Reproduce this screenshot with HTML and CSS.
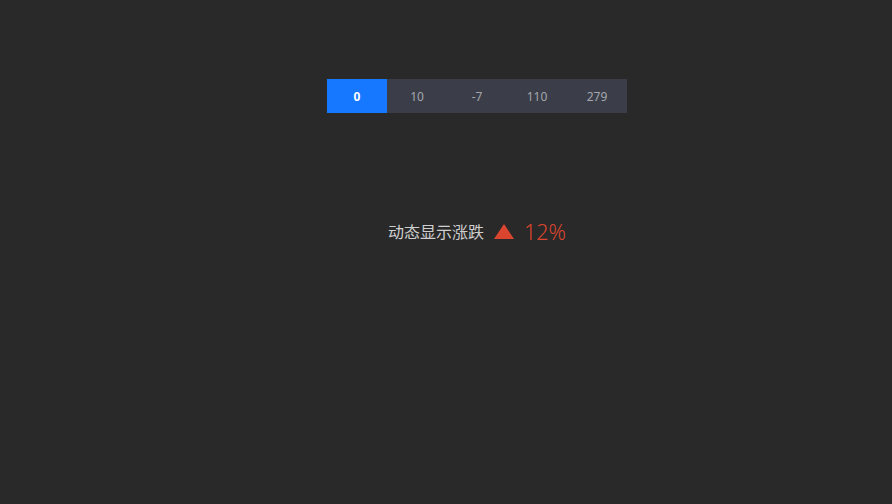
FILE: index.html
```html
<!DOCTYPE html>
<html>
<head>
<meta charset="utf-8">
<link rel="stylesheet" href="styles.css">
</head>
<body>
<div class="stage">
  <div class="segmented">
    <div class="seg active">0</div>
    <div class="seg">10</div>
    <div class="seg">-7</div>
    <div class="seg">110</div>
    <div class="seg">279</div>
  </div>
  <div class="trend">
    <span class="label">动态显示涨跌</span>
    <svg class="arrow" width="20" height="15" viewBox="0 0 20 15"><polygon points="10,0 20,15 0,15" fill="#d9452e"/></svg>
    <span class="value">12%</span>
  </div>
</div>
</body>
</html>
```
FILE: styles.css
```css
html, body {
  margin: 0;
  padding: 0;
  background: #292929;
  width: 892px;
  height: 504px;
  overflow: hidden;
  font-family: "Noto Sans", "Noto Sans CJK SC", sans-serif;
}
.stage {
  display: flex;
  flex-direction: column;
  align-items: center;
  padding-top: 79px;
  padding-left: 62px;
}
.segmented {
  display: flex;
  background: #3b3e48;
}
.seg {
  width: 60px;
  height: 34px;
  display: flex;
  align-items: center;
  justify-content: center;
  font-size: 12px;
  color: #a3a6ae;
}
.seg.active {
  background: #1677ff;
  color: #ffffff;
  font-weight: bold;
}
.trend {
  margin-top: 102px;
  display: flex;
  align-items: center;
  height: 32px;
}
.label {
  font-size: 16px;
  color: #cfcfcf;
  font-family: "Noto Sans CJK SC", sans-serif;
}
.arrow {
  margin-left: 10px;
  margin-top: 1px;
}
.value {
  margin-left: 10px;
  font-size: 21.5px;
  font-weight: 300;
  color: #d9452e;
  font-family: "Noto Sans", sans-serif;
}
```
